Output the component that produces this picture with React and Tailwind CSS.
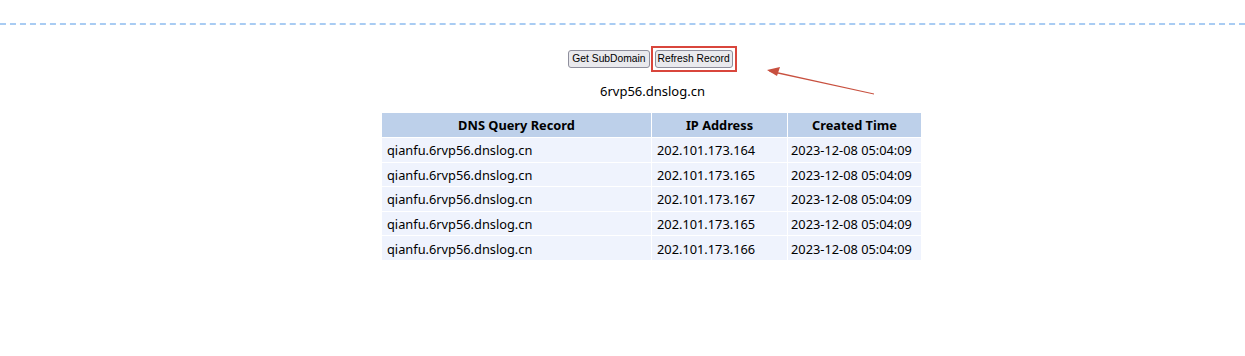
const rows = [
  ["qianfu.6rvp56.dnslog.cn", "202.101.173.164", "2023-12-08 05:04:09"],
  ["qianfu.6rvp56.dnslog.cn", "202.101.173.165", "2023-12-08 05:04:09"],
  ["qianfu.6rvp56.dnslog.cn", "202.101.173.167", "2023-12-08 05:04:09"],
  ["qianfu.6rvp56.dnslog.cn", "202.101.173.165", "2023-12-08 05:04:09"],
  ["qianfu.6rvp56.dnslog.cn", "202.101.173.166", "2023-12-08 05:04:09"],
];

export default function App() {
  return (
    <div className="relative w-[1245px] h-[356px] bg-white overflow-hidden" style={{ fontFamily: '"Noto Sans", "Open Sans", sans-serif' }}>
      <div className="pt-[23px]">
        <div className="h-0 border-t-2 border-dashed border-[#a9ccf3]" />
      </div>

      <div className="flex flex-col items-center pl-[60px] pt-[21px]">
        <div className="flex items-center gap-[1px]" style={{ fontFamily: '"Liberation Sans", Arial, sans-serif' }}>
          <button className="h-[18px] px-[3px] text-[10.3px] leading-none text-black bg-[#e9e9ed] border border-[#8f8f9d] rounded-[3px] whitespace-nowrap">
            Get SubDomain
          </button>
          <div className="flex p-[2px] border-2 border-[#d9463c]">
            <button className="h-[18px] px-[2px] text-[10.3px] leading-none text-black bg-[#e9e9ed] border border-[#8f8f9d] rounded-[3px] whitespace-nowrap">
              Refresh Record
            </button>
          </div>
        </div>

        <div className="mt-[9px] text-[13px] leading-[20px] text-black">6rvp56.dnslog.cn</div>

        <table className="mt-[11px] -ml-[2px] table-fixed border-separate border-spacing-[1px] text-[12.8px] text-black whitespace-nowrap">
          <thead>
            <tr className="bg-[#bdd0ea]">
              <th className="w-[269px] h-[24px] p-0 pt-[2px] font-bold text-center">DNS Query Record</th>
              <th className="w-[135px] h-[24px] p-0 pt-[2px] font-bold text-center">IP Address</th>
              <th className="w-[133px] h-[24px] p-0 pt-[2px] font-bold text-center">Created Time</th>
            </tr>
          </thead>
          <tbody>
            {rows.map((r, i) => (
              <tr key={i} className="bg-[#eff3fd]">
                <td className="h-[23.6px] p-0 pt-[2px] pl-[5px] text-left">{r[0]}</td>
                <td className="h-[23.6px] p-0 pt-[2px] pl-[5px] text-left">{r[1]}</td>
                <td className="h-[23.6px] p-0 pt-[2px] pl-[3px] text-left">{r[2]}</td>
              </tr>
            ))}
          </tbody>
        </table>
      </div>

      <svg className="absolute left-[764px] top-[64px]" width="114" height="34" viewBox="0 0 114 34">
        <path d="M4 6 L110 29.5 L110 30.5 L6 8 Z" fill="#c8503f" />
        <path d="M3 6 L16 3 L13 12 Z" fill="#c8503f" />
      </svg>
    </div>
  );
}
